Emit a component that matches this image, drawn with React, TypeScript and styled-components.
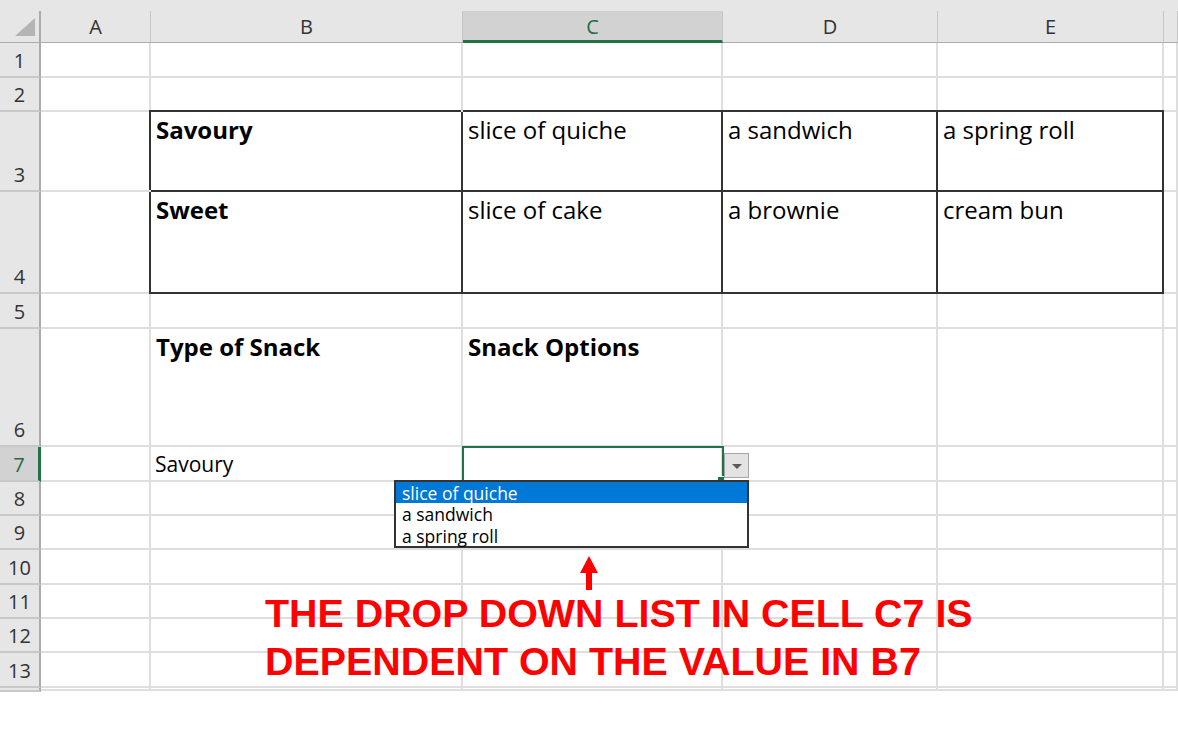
import React from "react";
import styled, { createGlobalStyle, css } from "styled-components";

const GlobalStyle = createGlobalStyle`
  html, body {
    margin: 0;
    padding: 0;
    background: #fff;
  }
  body {
    font-family: "Open Sans", "Noto Sans", sans-serif;
  }
`;

const COLS = [
  { id: "A", width: 110 },
  { id: "B", width: 312 },
  { id: "C", width: 260 },
  { id: "D", width: 215 },
  { id: "E", width: 226 },
  { id: "F", width: 14 },
];

const ROWS = [35, 34, 80, 102, 35, 118, 35, 34, 34, 35, 34, 34, 35];

type CellData = { text: string; bold?: boolean; top?: boolean; small?: boolean };

const DATA: Record<string, CellData> = {
  B3: { text: "Savoury", bold: true, top: true },
  C3: { text: "slice of quiche", top: true },
  D3: { text: "a sandwich", top: true },
  E3: { text: "a spring roll", top: true },
  B4: { text: "Sweet", bold: true, top: true },
  C4: { text: "slice of cake", top: true },
  D4: { text: "a brownie", top: true },
  E4: { text: "cream bun", top: true },
  B6: { text: "Type of Snack", bold: true, top: true },
  C6: { text: "Snack Options", bold: true, top: true },
  B7: { text: "Savoury", small: true },
};

const OPTIONS = ["slice of quiche", "a sandwich", "a spring roll"];

const SELECTED_COL = "C";
const SELECTED_ROW = 7;

// cells that carry the black "all borders" box (B3:E4)
const inBox = (col: string, row: number) =>
  row >= 3 && row <= 4 && ["B", "C", "D", "E"].includes(col);

const Page = styled.div`
  position: relative;
  width: 1178px;
  height: 740px;
  overflow: hidden;
  background: #fff;
`;

const TopStrip = styled.div`
  height: 11px;
  background: #e6e6e6;
`;

const Sheet = styled.div`
  display: grid;
  grid-template-columns: 41px ${COLS.map((c) => `${c.width}px`).join(" ")};
  grid-template-rows: 32px ${ROWS.map((r) => `${r}px`).join(" ")} 2px;
`;

const Corner = styled.div`
  background: #e6e6e6;
  border-right: 2px solid #ababab;
  border-bottom: 1px solid #ababab;
  display: flex;
  align-items: flex-end;
  justify-content: flex-end;
  padding: 0 4px 6px 0;
  box-sizing: border-box;

  &::after {
    content: "";
    width: 0;
    height: 0;
    border-left: 20px solid transparent;
    border-bottom: 18px solid #b4b4b4;
  }
`;

const ColHeader = styled.div<{ $selected?: boolean }>`
  box-sizing: border-box;
  display: flex;
  align-items: center;
  justify-content: center;
  font-size: 20px;
  color: ${(p) => (p.$selected ? "#1f6b47" : "#333")};
  background: ${(p) => (p.$selected ? "#d2d2d2" : "#e6e6e6")};
  border-right: 1px solid #c6c6c6;
  border-bottom: ${(p) => (p.$selected ? "3px solid #217346" : "1px solid #ababab")};
  padding-top: ${(p) => (p.$selected ? "2px" : "0")};
`;

const RowHeader = styled.div<{ $selected?: boolean }>`
  box-sizing: border-box;
  display: flex;
  align-items: flex-end;
  justify-content: center;
  font-size: 20px;
  line-height: 26px;
  padding-bottom: 2px;
  overflow: hidden;
  color: ${(p) => (p.$selected ? "#1f6b47" : "#333")};
  background: ${(p) => (p.$selected ? "#d2d2d2" : "#e6e6e6")};
  border-right: ${(p) => (p.$selected ? "3px solid #217346" : "2px solid #ababab")};
  border-bottom: 2px solid #c8c8c8;
`;

const Cell = styled.div<{
  $bold?: boolean;
  $top?: boolean;
  $small?: boolean;
  $box?: boolean;
  $boxTop?: boolean;
  $boxLeft?: boolean;
  $active?: boolean;
}>`
  box-sizing: border-box;
  background: #fff;
  display: flex;
  align-items: ${(p) => (p.$top ? "flex-start" : "flex-end")};
  padding: ${(p) => (p.$top ? "3px 4px 0 5px" : "0 4px 1px 4px")};
  font-size: ${(p) => (p.$small ? "21px" : "24px")};
  line-height: 30px;
  color: #000;
  font-weight: ${(p) => (p.$bold ? 700 : 400)};
  white-space: nowrap;
  border-right: 2px solid ${(p) => (p.$box ? "#333" : "#dedede")};
  border-bottom: 2px solid ${(p) => (p.$box ? "#333" : "#dedede")};
  ${(p) => p.$active && css`position: relative;`}
  ${(p) =>
    p.$box &&
    css`
      box-shadow: ${p.$boxLeft ? "-2px" : "0"} ${p.$boxTop ? "-2px" : "0"} 0 #333;
    `}
`;

const Selection = styled.div`
  position: absolute;
  left: -1px;
  top: -1px;
  right: -3px;
  bottom: -3px;
  border: 2px solid #217346;
  pointer-events: none;
`;

const FillHandle = styled.div`
  position: absolute;
  right: -4px;
  bottom: -4px;
  width: 6px;
  height: 6px;
  background: #217346;
  border: 1px solid #fff;
`;

const DropButton = styled.div`
  position: absolute;
  left: calc(100% + 3px);
  top: 6px;
  width: 25px;
  height: 25px;
  box-sizing: border-box;
  background: #e3e3e3;
  border: 1px solid #a6a6a6;
  display: flex;
  align-items: center;
  justify-content: center;

  &::after {
    content: "";
    width: 0;
    height: 0;
    margin-top: 2px;
    border-left: 5px solid transparent;
    border-right: 5px solid transparent;
    border-top: 5px solid #595959;
  }
`;

const OptionList = styled.ul`
  position: absolute;
  left: -69px;
  top: 33px;
  width: 355px;
  height: 68px;
  box-sizing: border-box;
  margin: 0;
  padding: 0;
  list-style: none;
  background: #fff;
  border: 2px solid #333;
  z-index: 2;
  display: flex;
  flex-direction: column;
`;

const Option = styled.li<{ $highlighted?: boolean }>`
  flex: 1;
  box-sizing: border-box;
  line-height: 19px;
  padding: 2px 0 0 6px;
  font-size: 17.5px;
  white-space: nowrap;
  color: ${(p) => (p.$highlighted ? "#fff" : "#000")};
  background: ${(p) => (p.$highlighted ? "#0078d7" : "transparent")};
`;

const Callout = styled.div`
  position: absolute;
  left: 265px;
  top: 556px;
  display: flex;
  flex-direction: column;
  align-items: flex-start;
`;

const Arrow = styled.svg`
  display: block;
  margin-left: 315px;
`;

const Note = styled.div`
  margin-top: -1px;
  font-family: "Liberation Sans", Arial, sans-serif;
  font-weight: 700;
  font-size: 39.4px;
  line-height: 48px;
  color: #ff0000;
  white-space: nowrap;
`;

export default function App() {
  const rowNumbers = [...ROWS.map((_, i) => i + 1), 0];

  return (
    <>
      <GlobalStyle />
      <Page>
        <TopStrip />
        <Sheet>
          <Corner />
          {COLS.map((c) => (
            <ColHeader key={c.id} $selected={c.id === SELECTED_COL}>
              {c.id === "F" ? "" : c.id}
            </ColHeader>
          ))}

          {rowNumbers.map((r, ri) => (
            <React.Fragment key={ri}>
              <RowHeader $selected={r === SELECTED_ROW}>{r > 0 ? r : ""}</RowHeader>
              {COLS.map((c) => {
                const key = `${c.id}${r}`;
                const d = DATA[key];
                const box = inBox(c.id, r);
                const active = c.id === SELECTED_COL && r === SELECTED_ROW;
                return (
                  <Cell
                    key={key}
                    $bold={d?.bold}
                    $top={d?.top}
                    $small={d?.small}
                    $box={box}
                    $boxTop={box && r === 3}
                    $boxLeft={box && c.id === "B"}
                    $active={active}
                  >
                    {d?.text}
                    {active && (
                      <>
                        <Selection />
                        <FillHandle />
                        <DropButton />
                        <OptionList>
                          {OPTIONS.map((o, i) => (
                            <Option key={o} $highlighted={i === 0}>
                              {o}
                            </Option>
                          ))}
                        </OptionList>
                      </>
                    )}
                  </Cell>
                );
              })}
            </React.Fragment>
          ))}
        </Sheet>

        <Callout>
          <Arrow width="18" height="34" viewBox="0 0 18 34">
            <path d="M9 0 L18 17 L12 17 L12 34 L6 34 L6 17 L0 17 Z" fill="#ff0000" />
          </Arrow>
          <Note>
            THE DROP DOWN LIST IN CELL C7 IS
            <br />
            DEPENDENT ON THE VALUE IN B7
          </Note>
        </Callout>
      </Page>
    </>
  );
}
